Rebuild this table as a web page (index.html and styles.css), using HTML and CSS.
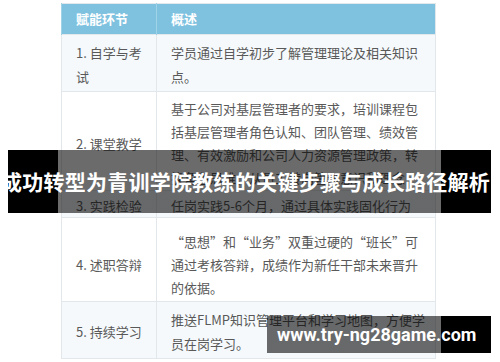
FILE: index.html
```html
<!DOCTYPE html>
<html lang="zh-CN">
<head>
<meta charset="utf-8">
<title>成功转型为青训学院教练的关键步骤与成长路径解析</title>
<link rel="stylesheet" href="styles.css">
</head>
<body>
<div class="shot">
  <div class="frame">
    <table class="steps">
      <thead>
        <tr><th class="c1">赋能环节</th><th class="c2">概述</th></tr>
      </thead>
      <tbody>
        <tr class="r1 odd">
          <td class="c1">1. 自学与考<br>试</td>
          <td class="c2">学员通过自学初步了解管理理论及相关知识<br>点。</td>
        </tr>
        <tr class="r2">
          <td class="c1">2. 课堂教学</td>
          <td class="c2">基于公司对基层管理者的要求，培训课程包<br>括基层管理者角色认知、团队管理、绩效管<br>理、有效激励和公司人力资源管理政策，转<br>换角色思维，从员工转向管理意识和理念</td>
        </tr>
        <tr class="r3 odd">
          <td class="c1">3. 实践检验</td>
          <td class="c2">任岗实践5-6个月，通过具体实践固化行为</td>
        </tr>
        <tr class="r4">
          <td class="c1">4. 述职答辩</td>
          <td class="c2">“思想”和“业务”双重过硬的“班长”可<br>通过考核答辩，成绩作为新任干部未来晋升<br>的依据。</td>
        </tr>
        <tr class="r5 odd">
          <td class="c1">5. 持续学习</td>
          <td class="c2">推送FLMP知识管理平台和学习地图，方便学<br>员在岗学习。</td>
        </tr>
      </tbody>
    </table>
  </div>
  <div class="banner"><span class="banner-text">成功转型为青训学院教练的关键步骤与成长路径解析</span></div>
  <div class="mark">www.try-ng28game.com</div>
</div>
</body>
</html>
```

FILE: styles.css
```css
html, body {
  margin: 0;
  padding: 0;
  background: #ffffff;
}

.shot {
  position: relative;
  width: 500px;
  height: 362px;
  overflow: hidden;
  background: #ffffff;
  font-family: "Noto Sans CJK SC", "Noto Sans", sans-serif;
}

.frame {
  margin-left: 58px;
  width: 383px;
  height: 362px;
  padding: 3px 5px 0 3px;
  box-sizing: border-box;
  background: #ffffff;
}

.steps {
  width: 375px;
  border-collapse: collapse;
  table-layout: fixed;
  border: 1px solid #e2e7eb;
  font-size: 13px;
  color: #595959;
}

.steps th,
.steps td {
  text-align: left;
  vertical-align: middle;
  padding: 0 10px 0 14px;
  white-space: nowrap;
}

.steps .c1 {
  width: 95px;
  box-sizing: border-box;
}

.steps th {
  background: #7fc2df;
  color: #ffffff;
  font-weight: 700;
  height: 30px;
  line-height: 30px;
  border-left: 1px solid #9fd1e7;
  padding-top: 0;
  padding-bottom: 0;
}

.steps td {
  border-top: 1px solid #e2e7eb;
  border-left: 1px solid #e2e7eb;
}

.steps td.c2,
.steps th.c2 {
  padding-left: 14px;
}

.steps tr.odd td {
  background: #f6f9fc;
}

.steps tr.r1 td { padding-top: 6px; padding-bottom: 2px; line-height: 24px; }
.steps tr.r2 td { padding-top: 5px; padding-bottom: 1px; line-height: 23px; }
.steps tr.r3 td { padding-top: 3px; padding-bottom: 0; line-height: 23px; }
.steps tr.r4 td { padding-top: 12px; padding-bottom: 2px; line-height: 23px; }
.steps tr.r5 td { padding-top: 6px; padding-bottom: 2px; line-height: 24px; }

.banner {
  position: absolute;
  left: 8px;
  top: 150px;
  width: 483px;
  height: 63px;
  display: flex;
  align-items: center;
  background: linear-gradient(to right,
    #000000 0, #000000 50px,
    rgba(0, 0, 0, 0.58) 50px, rgba(0, 0, 0, 0.58) 433px,
    #000000 433px, #000000 100%);
}

.banner-text {
  margin-left: -7px;
  white-space: nowrap;
  color: #ffffff;
  font-family: "Noto Sans CJK SC", "Noto Sans", sans-serif;
  font-weight: 700;
  font-size: 21px;
  letter-spacing: 0.26px;
  line-height: 63px;
}

.mark {
  position: absolute;
  left: 267px;
  top: 316px;
  width: 224px;
  height: 37px;
  box-sizing: border-box;
  padding-left: 10px;
  color: #ffffff;
  font-family: Roboto, "Liberation Sans", sans-serif;
  font-weight: 700;
  font-size: 18px;
  line-height: 37px;
  white-space: nowrap;
  background: linear-gradient(to right,
    rgba(0, 0, 0, 0.58) 0, rgba(0, 0, 0, 0.58) 174px,
    #000000 174px, #000000 100%);
}
```
